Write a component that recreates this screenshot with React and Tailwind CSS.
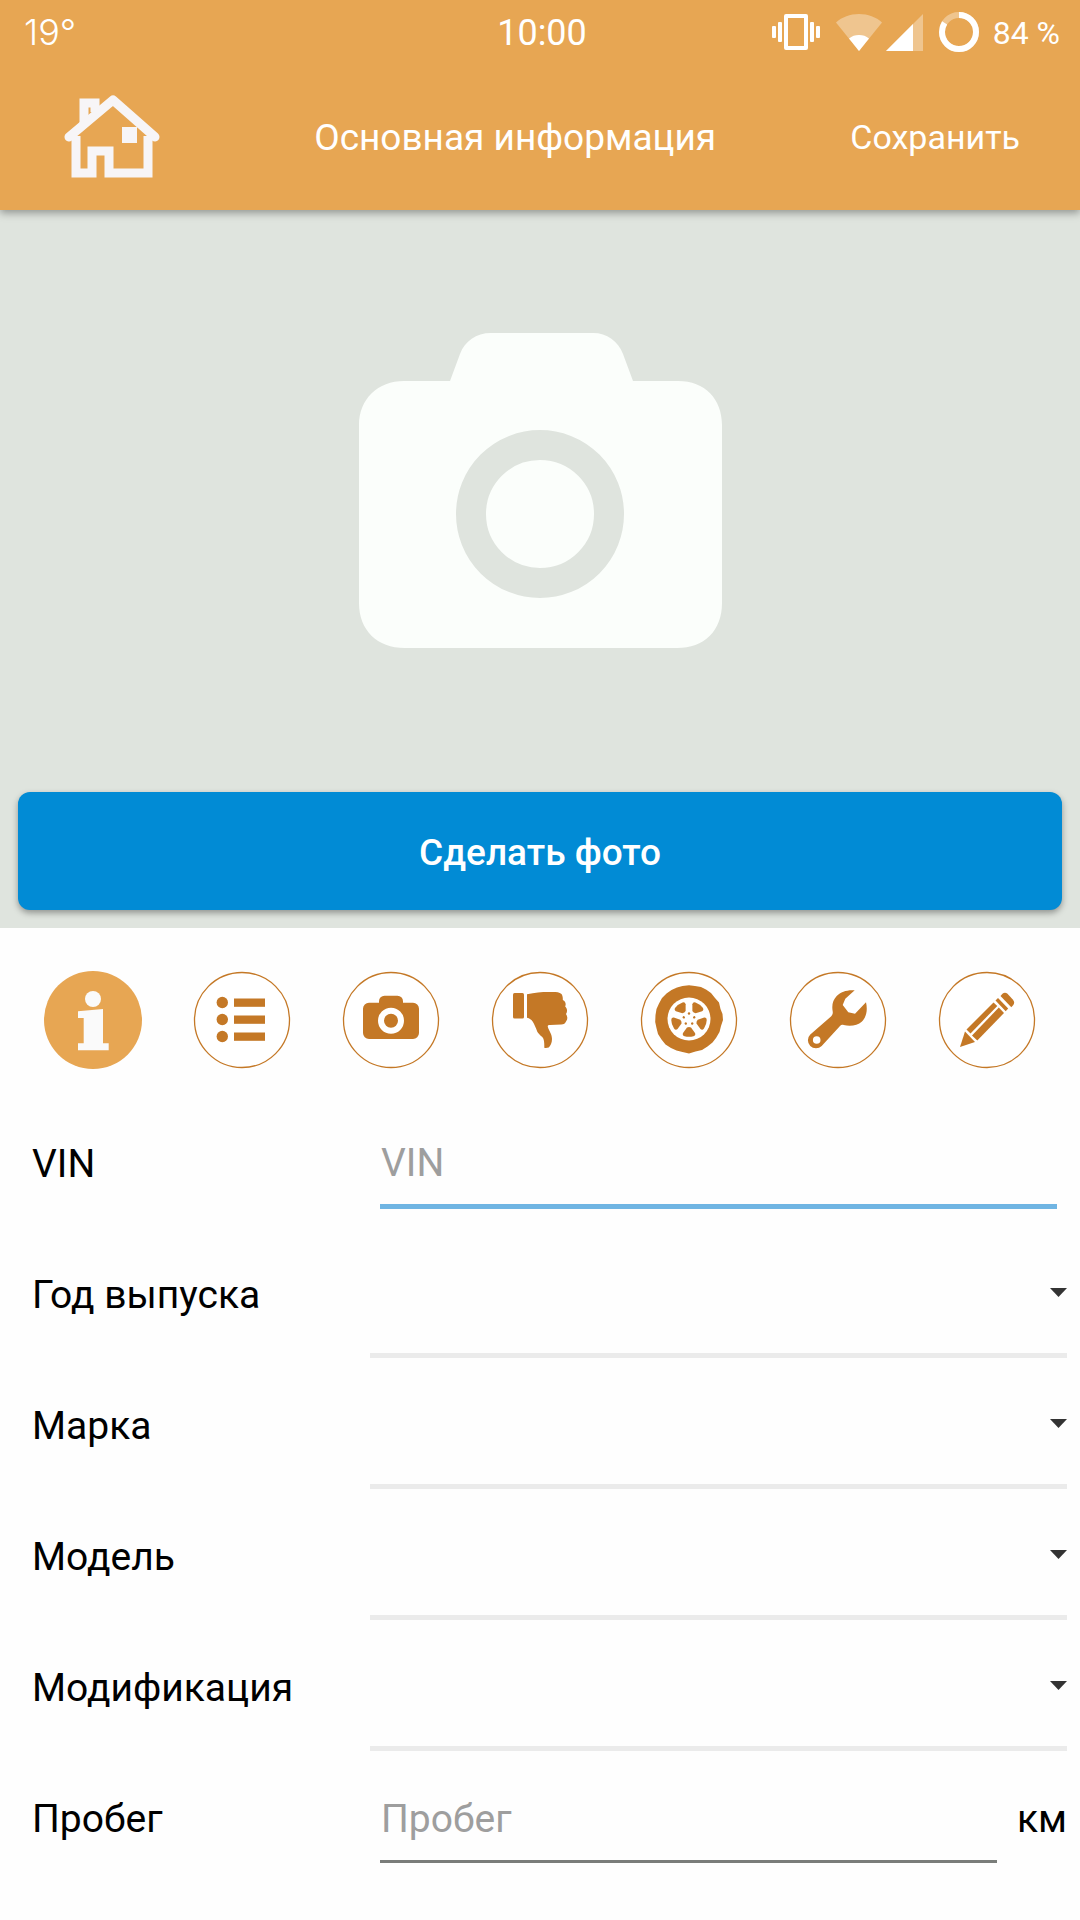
import { useState } from 'react';

const ACCENT = '#c47826';

const SELECT_FIELDS = [
  { id: 'year', label: 'Год выпуска' },
  { id: 'brand', label: 'Марка' },
  { id: 'model', label: 'Модель' },
  { id: 'modification', label: 'Модификация' }
];

const VibrateIcon = () => (
  <svg width="48" height="36" viewBox="0 0 48 36" fill="#fff" aria-hidden="true">
    <path fillRule="evenodd" d="M14 0h20a2 2 0 0 1 2 2v32a2 2 0 0 1-2 2H14a2 2 0 0 1-2-2V2a2 2 0 0 1 2-2zm2 4v28h16V4z" />
    <rect x="6" y="8" width="4" height="20" rx="1" />
    <rect x="0" y="12" width="4" height="12" rx="1" />
    <rect x="38" y="8" width="4" height="20" rx="1" />
    <rect x="44" y="12" width="4" height="12" rx="1" />
  </svg>
);

const WifiIcon = () => (
  <svg width="46" height="37" viewBox="0 0 46 37" fill="#fff" aria-hidden="true">
    <path opacity="0.35" d="M23 37 0 8.500C6 3 14 0 23 0s17 3 23 8.500z" />
    <path d="M23 37 13 24.500c3-2.500 6-3.500 10-3.500s7 1 10 3.500z" />
  </svg>
);

const SignalIcon = () => (
  <svg width="37" height="37" viewBox="0 0 37 37" fill="#fff" aria-hidden="true">
    <path opacity="0.35" d="M37 0v37H0z" />
    <path d="M27 10v27H0z" />
  </svg>
);

const BatteryIcon = () => (
  <svg width="40" height="40" viewBox="0 0 40 40" fill="none" stroke="#fff" strokeWidth="6" aria-hidden="true">
    <circle cx="20" cy="20" r="17" opacity="0.35" />
    <circle cx="20" cy="20" r="17" pathLength="100" strokeDasharray="84 16" transform="rotate(-90 20 20)" />
  </svg>
);

const HomeIcon = () => (
  <svg width="96" height="87" viewBox="0 0 96 87" fill="none" stroke="#f7f5f7" aria-hidden="true">
    <path d="M12 42v37h16V57h17v22h39V42" strokeWidth="9" />
    <path d="M5 43 49 6l42 37" strokeWidth="9" strokeLinecap="round" strokeLinejoin="round" />
    <path d="M20 31V9h11v9" strokeWidth="9" />
    <rect x="58" y="33" width="15" height="16" fill="#f7f5f7" stroke="none" />
  </svg>
);

const PhotoPlaceholder = () => (
  <svg width="363" height="316" viewBox="0 0 363 316" aria-hidden="true">
    <path
      fill="#fbfefb"
      d="M91 48 101 21C106 8 117 0 132 0h102c14 0 25 8 30 21l10 27h45c27 0 44 18 44 44v178c0 28-18 45-45 45H46c-28 0-46-18-46-45V92c0-26 19-44 45-44z"
    />
    <circle cx="181" cy="181" r="69" fill="none" stroke="#dfe4de" strokeWidth="30" />
  </svg>
);

const Ring = () => <circle cx="49" cy="49" r="47.500" fill="#fff" stroke={ACCENT} strokeWidth="1.300" />;

const TabIcon = ({ children }) => (
  <svg className="block" width="98" height="98" viewBox="0 0 98 98" fill={ACCENT} aria-hidden="true">
    {children}
  </svg>
);

const InfoIcon = () => (
  <TabIcon>
    <circle cx="49" cy="49" r="49" fill="#e7a653" />
    <circle cx="49" cy="28" r="8" fill="#fafafa" />
    <path fill="#fafafa" d="M34 40.300 59 38v34.300h5.700v7H34v-7h5.700V47H34z" />
  </TabIcon>
);

const ListIcon = () => (
  <TabIcon>
    <Ring />
    {[31.5, 48.5, 65.5].map((y) => (
      <g key={y}>
        <circle cx="29.300" cy={y} r="5.700" />
        <rect x="41" y={y - 4} width="31" height="8.300" />
      </g>
    ))}
  </TabIcon>
);

const CameraIcon = () => (
  <TabIcon>
    <Ring />
    <path d="M27 31.700h10v-1.500a5.500 5.500 0 0 1 5.500-5.500h13a5.500 5.500 0 0 1 5.500 5.500v1.500h10a6 6 0 0 1 6 6V62a6 6 0 0 1-6 6H27a6 6 0 0 1-6-6V37.700a6 6 0 0 1 6-6z" />
    <circle cx="49" cy="49.700" r="10" fill="none" stroke="#fff" strokeWidth="6" />
  </TabIcon>
);

const ThumbDownIcon = () => (
  <TabIcon>
    <Ring />
    <rect x="22" y="22" width="11" height="25.500" rx="1.500" />
    <path d="M36 23.300C44 21.500 50 21 58 21c6 0 10-.300 12.500 2 1 1.500 1.500 3.500 1.300 6 2.700 1.200 3.500 4 2.400 6.500 2.300 2 2.300 5.500.800 7.500 1.800 2.500 1.600 5.500.300 7-1 2.500-2.500 3.500-5 3.500L59 54c-2 0-2.700.700-2 2.500 1 3.500 4 6.500 4 11.500 0 4-1.500 6.500-3.300 8.500-1.700.500-3.500.500-4.400.200 0-4 .200-8-2-10.700-2.300-2-4-3.500-5-5.300-1.500-4-3-7.500-4.500-10-1.300-2-3.300-3.500-5.800-4z" />
  </TabIcon>
);

const WheelIcon = () => (
  <TabIcon>
    <Ring />
    <path d="M49 14.200 55 15l6 1 5 2.500 5 3.500 4 5 4 4.500 1.500 6.500L82.500 43l.5 6-2 6-1.500 6-3.500 6-3.500 4.500-5 4L62 79l-6.500 1.500L49 82.500l-6.500-1.500-6-1.500-5.500-2.500-5.500-3.500-4-5-3.500-5.500-1.500-6L15.200 51l.3-7 1-6 2.500-5.500 3-5.500 4.500-4.500 5-3.500 5.500-2.500L42.500 15z" />
    <circle cx="49" cy="48" r="21.500" fill="#fff" />
    {[0, 72, 144, 216, 288].map((angle) => (
      <g key={angle} transform={`rotate(${angle} 49 48)`}>
        <path d="M47 56.500q2-1 4 0l4 5.500q1 2.300-1.500 3.200-4.500 1.300-9 0Q42 64.300 43 62z" />
        <circle cx="49" cy="53.500" r="1.200" transform="rotate(180 49 48)" />
      </g>
    ))}
  </TabIcon>
);

const WrenchIcon = () => (
  <TabIcon>
    <Ring />
    <path
      fillRule="evenodd"
      d="M65.700 19.300C59 18.500 52 20.500 47.700 25c-3.700 4-5.200 9-4 15.500.300 2-.200 3.500-1.700 5L21.300 63.500A8 8 0 1 0 32.700 75L51 55c1-1.200 2.200-1.500 3.700-1 6.500 1.500 14 .500 18-3.300 5-4.700 6-11.700 4.300-19.400L66 42.700l-6.700-1.400-5.600-7.300 2.600-6.300zM27.700 65.200a3.800 3.800 0 1 1 0 7.600 3.800 3.800 0 0 1 0-7.600z"
    />
  </TabIcon>
);

const PencilIcon = () => (
  <TabIcon>
    <Ring />
    <path d="M22 76l5-15.500 10 10.500z" />
    <path d="M28.500 58.500 55.500 31.500l3.800 3.500L32.500 62.500z" />
    <path d="M34 64.500 60.800 36.500l5.200 5.500-26.700 27.500z" />
    <path d="M57.500 29.500 60 27l10.200 10.500-2.500 2.700z" />
    <path d="M62.500 25l2-2.300c1.300-1.200 3.500-1.200 5 0l5.500 6c1.500 1.800 1.500 3.800.300 5.300l-2 2.200z" />
  </TabIcon>
);

const TABS = [
  { id: 'info', label: 'Основная информация', Icon: InfoIcon },
  { id: 'list', label: 'Комплектация', Icon: ListIcon },
  { id: 'photos', label: 'Фотографии', Icon: CameraIcon },
  { id: 'defects', label: 'Дефекты', Icon: ThumbDownIcon },
  { id: 'wheels', label: 'Колёса', Icon: WheelIcon },
  { id: 'service', label: 'Обслуживание', Icon: WrenchIcon },
  { id: 'notes', label: 'Заметки', Icon: PencilIcon }
];

const StatusBar = () => (
  <div className="grid h-16 grid-cols-[1fr_auto_1fr] items-center pr-5 pl-6">
    <span className="font-['Inter',sans-serif] text-[36px] leading-10 font-light">19°</span>
    <span className="pt-0.5 text-[36px] leading-10">10:00</span>
    <div className="flex items-center justify-end">
      <VibrateIcon />
      <div className="ml-4 flex items-center gap-1">
        <WifiIcon />
        <SignalIcon />
      </div>
      <div className="ml-4 flex items-center gap-3.5">
        <BatteryIcon />
        <span className="pt-0.5 text-[32px] leading-10">84 %</span>
      </div>
    </div>
  </div>
);

const FormRow = ({ id, label, children }) => (
  <div className="flex h-[131px] items-center pl-8">
    <label htmlFor={id} className="w-[338px] shrink-0 text-[39px] leading-12">
      {label}
    </label>
    {children}
  </div>
);

const SelectField = ({ id, value, onChange }) => (
  <div className="relative flex-1 self-stretch pr-[13px] pb-0.5">
    <select
      id={id}
      value={value}
      onChange={onChange}
      className="h-full w-full appearance-none border-b-[5px] border-[#ebebeb] bg-transparent pr-8 text-[39px] outline-none"
    >
      <option value=""></option>
    </select>
    <svg
      className="pointer-events-none absolute top-[59px] right-[13px]"
      width="17"
      height="9"
      viewBox="0 0 17 9"
      fill="#333"
      aria-hidden="true"
    >
      <path d="M0 0h17L8.500 9z" />
    </svg>
  </div>
);

const App = () => {
  const [form, setForm] = useState({
    vin: '',
    year: '',
    brand: '',
    model: '',
    modification: '',
    mileage: ''
  });

  const handleChange = (event) => {
    setForm({ ...form, [event.target.id]: event.target.value });
  };

  return (
    <div className="min-h-screen bg-[#fefefe] font-['Roboto',sans-serif] text-black">
      <header className="relative z-10 bg-[#e7a653] text-white shadow-[0_3px_8px_rgba(0,0,0,0.35)]">
        <StatusBar />
        <div className="flex h-[146px] items-center justify-between pr-15 pl-16">
          <button type="button" aria-label="Домой" className="pr-5">
            <HomeIcon />
          </button>
          <h1 className="pt-0.5 text-[37px] leading-12">Основная информация</h1>
          <button type="button" className="text-[34px] leading-12">
            Сохранить
          </button>
        </div>
      </header>

      <section className="flex flex-col items-center bg-[#dfe4de] px-[18px] pt-[123px] pb-[18px]">
        <PhotoPlaceholder />
        <button
          type="button"
          className="mt-[143px] h-[118px] w-full rounded-xl bg-[#018bd5] pt-1 text-[37px] font-medium text-white shadow-[0_3px_6px_rgba(0,0,0,0.35)]"
        >
          Сделать фото
        </button>
      </section>

      <nav className="flex justify-between px-11 pt-[43px] pb-[29px]">
        {TABS.map(({ id, label, Icon }) => (
          <button key={id} type="button" aria-label={label} className="rounded-full">
            <Icon />
          </button>
        ))}
      </nav>

      <form>
        <FormRow id="vin" label="VIN">
          <input
            id="vin"
            type="text"
            placeholder="VIN"
            value={form.vin}
            onChange={handleChange}
            className="mr-[23px] ml-2.5 h-[90px] min-w-0 flex-1 border-b-[5px] border-[#70b5e3] pt-1 pl-px text-[39px] outline-none placeholder:text-[#9e9e9e]"
          />
        </FormRow>

        {SELECT_FIELDS.map(({ id, label }) => (
          <FormRow key={id} id={id} label={label}>
            <SelectField id={id} value={form[id]} onChange={handleChange} />
          </FormRow>
        ))}

        <FormRow id="mileage" label="Пробег">
          <input
            id="mileage"
            type="text"
            placeholder="Пробег"
            value={form.mileage}
            onChange={handleChange}
            className="ml-2.5 h-[88px] min-w-0 flex-1 border-b-[3px] border-[#7a7d7a] pt-1 pl-px text-[39px] outline-none placeholder:text-[#9e9e9e]"
          />
          <span className="mr-[13px] ml-5 text-[39px] leading-12">км</span>
        </FormRow>
      </form>
    </div>
  );
};

export default App;
